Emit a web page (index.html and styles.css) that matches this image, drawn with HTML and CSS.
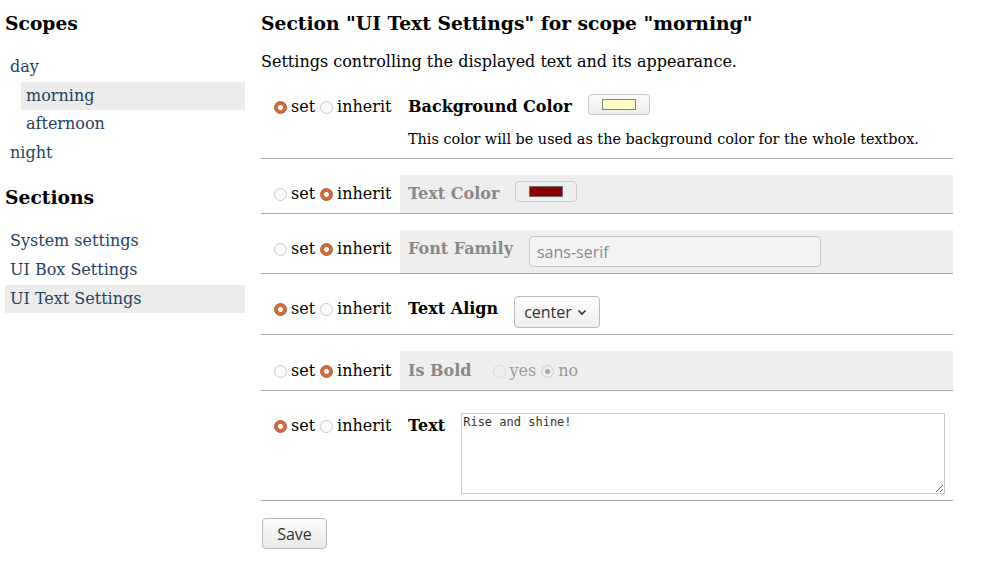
FILE: index.html
```html
<!DOCTYPE html>
<html lang="en">
<head>
<meta charset="utf-8">
<title>Settings</title>
<link rel="stylesheet" href="styles.css">
</head>
<body>
<div class="page">
  <nav class="sidebar">
    <h2 class="side-title">Scopes</h2>
    <div class="nav-list">
      <a class="nav-item">day</a>
      <a class="nav-item sub active">morning</a>
      <a class="nav-item sub">afternoon</a>
      <a class="nav-item">night</a>
    </div>
    <h2 class="side-title sections">Sections</h2>
    <div class="nav-list">
      <a class="nav-item">System settings</a>
      <a class="nav-item">UI Box Settings</a>
      <a class="nav-item active">UI Text Settings</a>
    </div>
  </nav>
  <main class="main">
    <h1 class="main-title">Section "UI Text Settings" for scope "morning"</h1>
    <p class="intro">Settings controlling the displayed text and its appearance.</p>

    <div class="setting">
      <div class="mode">
        <label class="opt"><input type="radio" name="m1" checked>set</label>
        <label class="opt"><input type="radio" name="m1">inherit</label>
      </div>
      <div class="field">
        <div class="field-main">
          <span class="field-label">Background Color</span>
          <span class="color-btn"><span class="swatch swatch-bg"></span></span>
        </div>
        <div class="field-desc">This color will be used as the background color for the whole textbox.</div>
      </div>
    </div>

    <div class="setting">
      <div class="mode">
        <label class="opt"><input type="radio" name="m2">set</label>
        <label class="opt"><input type="radio" name="m2" checked>inherit</label>
      </div>
      <div class="field inherited">
        <div class="field-main">
          <span class="field-label">Text Color</span>
          <span class="color-btn disabled"><span class="swatch swatch-fg"></span></span>
        </div>
      </div>
    </div>

    <div class="setting">
      <div class="mode">
        <label class="opt"><input type="radio" name="m3">set</label>
        <label class="opt"><input type="radio" name="m3" checked>inherit</label>
      </div>
      <div class="field inherited">
        <div class="field-main">
          <span class="field-label">Font Family</span>
          <input class="text-input" type="text" value="sans-serif" disabled>
        </div>
      </div>
    </div>

    <div class="setting">
      <div class="mode">
        <label class="opt"><input type="radio" name="m4" checked>set</label>
        <label class="opt"><input type="radio" name="m4">inherit</label>
      </div>
      <div class="field">
        <div class="field-main">
          <span class="field-label">Text Align</span>
          <span class="select">center<svg class="chev" width="10" height="7" viewBox="0 0 10 7"><path d="M1.5 1.5 L5 5 L8.5 1.5" fill="none" stroke="#333" stroke-width="1.6"/></svg></span>
        </div>
      </div>
    </div>

    <div class="setting">
      <div class="mode tall">
        <label class="opt"><input type="radio" name="m5">set</label>
        <label class="opt"><input type="radio" name="m5" checked>inherit</label>
      </div>
      <div class="field inherited">
        <div class="field-main tall">
          <span class="field-label">Is Bold</span>
          <span class="bool">
            <label class="opt dis"><input type="radio" name="b5" disabled>yes</label>
            <label class="opt dis"><input type="radio" name="b5" checked disabled>no</label>
          </span>
        </div>
      </div>
    </div>

    <div class="setting">
      <div class="mode">
        <label class="opt"><input type="radio" name="m6" checked>set</label>
        <label class="opt"><input type="radio" name="m6">inherit</label>
      </div>
      <div class="field">
        <div class="field-main">
          <span class="field-label">Text</span>
          <textarea class="textarea">Rise and shine!</textarea>
        </div>
      </div>
    </div>

    <button class="save" type="button">Save</button>
  </main>
</div>
</body>
</html>
```

FILE: styles.css
```css
body {
  margin: 0;
  padding-top: 1px;
  font-family: "DejaVu Serif", serif;
  font-size: 16px;
  color: #000;
  background: #fff;
}

.page {
  display: flex;
  padding-left: 5px;
}

.sidebar {
  width: 240px;
  flex: none;
}

.side-title {
  font-size: 18.72px;
  line-height: 24px;
  margin: 10px 0 18px;
  font-weight: bold;
}

.side-title.sections {
  margin-top: 18px;
  margin-bottom: 18px;
}

.nav-list {
  display: flex;
  flex-direction: column;
}

.nav-item {
  display: block;
  padding: 4px 5px;
  line-height: 20.6px;
  color: #1f4361;
  text-decoration: none;
}

.nav-item.sub {
  margin-left: 16px;
}

.nav-item.active {
  background: #ececec;
}

.main {
  margin-left: 16px;
  width: 692px;
  flex: none;
}

.main-title {
  font-size: 18.72px;
  line-height: 24px;
  margin: 10px 0 0;
  font-weight: bold;
}

.intro {
  margin: 17px 0 0;
  line-height: 20px;
}

.setting {
  display: flex;
  margin-top: 16px;
  border-bottom: 1px solid #a8a8a8;
}

.mode {
  width: 139px;
  flex: none;
  box-sizing: border-box;
  padding: 6px 0 6px 13px;
  display: flex;
  align-items: flex-start;
  line-height: 26px;
}

.mode.tall {
  padding-top: 7px;
}

.opt {
  display: inline-flex;
  align-items: center;
  line-height: 26px;
  margin-right: 5px;
}

.opt input {
  appearance: none;
  -webkit-appearance: none;
  width: 13px;
  height: 13px;
  margin: 0 4px 0 0;
  border-radius: 50%;
  box-sizing: border-box;
  border: 1px solid #c9c9c9;
  background: #fbfbfb;
  flex: none;
}

.opt input:checked {
  border: 1px solid #b9552b;
  background: radial-gradient(circle, #fff 0 2.1px, #d36a3e 2.9px);
}

.opt.dis {
  color: #9a9a9a;
}

.opt.dis input {
  border-color: #d9d9d9;
  background: #efefef;
}

.opt.dis input:checked {
  border-color: #cfcfcf;
  background: radial-gradient(circle, #a9a9a9 0 2.1px, #ececec 2.9px);
}

.field {
  flex: 1;
  min-width: 0;
  padding: 6px 8px;
}

.field.inherited {
  background: #eeeeee;
  color: #898989;
}

.field-main {
  display: flex;
  align-items: flex-start;
}

.field-main.tall {
  padding-top: 1px;
}

.field-label {
  font-weight: bold;
  line-height: 26px;
  margin-right: 16px;
  white-space: nowrap;
}

.field-desc {
  font-size: 14.4px;
  line-height: 18px;
  margin: 10px 0 4px;
  color: #000;
}

.color-btn {
  width: 62px;
  height: 21px;
  box-sizing: border-box;
  border: 1px solid #c4c4c4;
  border-radius: 4px;
  background: linear-gradient(#fbfbfb, #ededed);
  display: flex;
  align-items: center;
  justify-content: center;
}

.color-btn.disabled {
  border-color: #cdcdcd;
  background: #efefef;
}

.swatch {
  width: 34px;
  height: 11px;
  box-sizing: border-box;
  border: 1px solid #808080;
}

.swatch-bg {
  background: #fffbc4;
}

.swatch-fg {
  background: #8e0000;
  border-color: #6e6e6e;
}

.text-input {
  width: 292px;
  height: 31px;
  box-sizing: border-box;
  margin: 0;
  border: 1px solid #c8c8c8;
  border-radius: 4px;
  background: #f3f3f3;
  padding: 0 7px;
  font-family: "Open Sans", "DejaVu Sans", sans-serif;
  font-size: 16px;
  color: #8a8a8a;
}

.select {
  display: inline-flex;
  align-items: center;
  height: 32px;
  width: 86px;
  box-sizing: border-box;
  border: 1px solid #bdbdbd;
  border-radius: 4px;
  background: linear-gradient(#fdfdfd, #eeeeee);
  padding: 0 0 0 9px;
  font-family: "Open Sans", "DejaVu Sans", sans-serif;
  font-size: 16px;
  color: #333;
}

.chev {
  margin-left: 5px;
}

.bool {
  display: inline-flex;
  align-items: center;
  padding-left: 5px;
}

.bool .opt {
  margin-right: 5px;
}

.textarea {
  width: 484px;
  height: 81px;
  box-sizing: border-box;
  margin: 0;
  border: 1px solid #c9c9c9;
  border-radius: 0;
  padding: 1px 1px;
  font-family: "DejaVu Sans Mono", monospace;
  font-size: 12px;
  color: #333;
  background: #fff;
}

.save {
  margin-top: 17px;
  margin-left: 1px;
  width: 65px;
  height: 31px;
  border: 1px solid #b9b9b9;
  border-radius: 4px;
  background: linear-gradient(#fcfcfc, #e9e9e9);
  font-family: "Open Sans", "DejaVu Sans", sans-serif;
  font-size: 16px;
  color: #333;
  padding: 0;
}
```
